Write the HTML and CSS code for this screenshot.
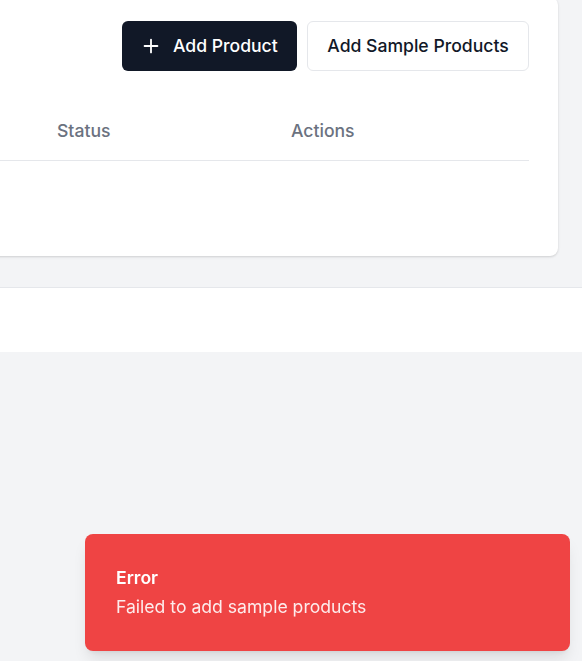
FILE: index.html
```html
<!DOCTYPE html>
<html lang="en">
<head>
<meta charset="utf-8">
<title>Products</title>
<link rel="stylesheet" href="styles.css">
</head>
<body>
<main class="main">
  <section class="card">
    <div class="card-head">
      <div class="actions">
        <button class="btn btn-primary" type="button">
          <svg class="icon" viewBox="0 0 24 24" width="22" height="22" fill="none" stroke="currentColor" stroke-width="2" stroke-linecap="round" stroke-linejoin="round"><path d="M5 12h14"/><path d="M12 5v14"/></svg>
          <span>Add Product</span>
        </button>
        <button class="btn btn-outline" type="button">Add Sample Products</button>
      </div>
    </div>
    <div class="table">
      <div class="thead">
        <div class="th"></div>
        <div class="th">Status</div>
        <div class="th">Actions</div>
      </div>
      <div class="tbody"></div>
    </div>
  </section>
</main>
<footer class="footer"></footer>
<div class="toast" role="alert">
  <div class="toast-title">Error</div>
  <div class="toast-desc">Failed to add sample products</div>
</div>
</body>
</html>
```
FILE: styles.css
```css
* { box-sizing: border-box; }
html, body { margin: 0; padding: 0; }
body {
  background: #f3f4f6;
  font-family: Inter, "Noto Sans", "Liberation Sans", sans-serif;
  color: #111827;
  overflow: hidden;
  height: 661px;
}
.main {
  padding: 0 24px 31px 0;
  margin-top: -3px;
}
.card {
  margin-left: -300px;
  background: #fff;
  border-radius: 8px;
  box-shadow: 0 1px 3px rgba(0,0,0,0.10), 0 1px 2px rgba(0,0,0,0.06);
  padding: 24px 29px 24px 24px;
}
.card-head {
  display: flex;
  align-items: center;
  justify-content: flex-end;
}
.actions {
  display: flex;
  gap: 10px;
}
.btn {
  height: 50px;
  border-radius: 6px;
  font-family: inherit;
  font-size: 17.6px;
  font-weight: 500;
  line-height: 26px;
  display: inline-flex;
  align-items: center;
  cursor: pointer;
  white-space: nowrap;
}
.btn-primary {
  background: #111827;
  color: #fff;
  border: none;
  padding: 0 20px 0 18px;
  gap: 11px;
  width: 175px;
}
.btn-outline {
  background: #fff;
  color: #111827;
  border: 1px solid #e5e7eb;
  padding: 0 20px;
  width: 222px;
  justify-content: center;
}
.icon { display: block; flex: none; }
.table { margin-top: 32px; }
.thead {
  display: grid;
  grid-template-columns: 1fr 234px 254px;
  border-bottom: 1px solid #e5e7eb;
}
.th {
  padding: 15px 16px 16px;
  line-height: 26px;
  min-height: 57px;
  font-size: 17.6px;
  font-weight: 500;
  color: #6b7280;
}
.tbody { height: 71px; }
.footer {
  background: #fff;
  border-top: 1px solid #e5e7eb;
  height: 65px;
}
.toast {
  position: fixed;
  right: 12px;
  bottom: 10px;
  width: 485px;
  background: #ef4444;
  color: #fff;
  border-radius: 8px;
  padding: 31px 31px;
  box-shadow: 0 10px 15px -3px rgba(0,0,0,0.1), 0 4px 6px -4px rgba(0,0,0,0.1);
  display: flex;
  flex-direction: column;
  gap: 3px;
}
.toast-title {
  font-size: 17.6px;
  font-weight: 600;
  line-height: 26px;
}
.toast-desc {
  font-size: 17.6px;
  line-height: 26px;
  opacity: 0.9;
}
```
